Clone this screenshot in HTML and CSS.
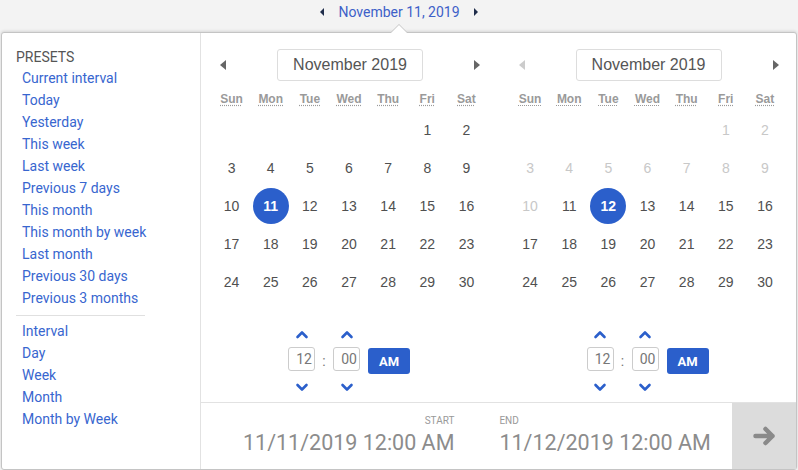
FILE: index.html
```html
<!DOCTYPE html>
<html lang="en">
<head>
  <meta charset="UTF-8">
  <meta name="viewport" content="width=device-width, initial-scale=1.0">
  <title>Date range picker</title>
  <link rel="stylesheet" href="styles.css">
</head>
<body>
  <div class="topbar">
    <span class="tri tri-left"></span>
    <span class="current">November 11, 2019</span>
    <span class="tri tri-right"></span>
  </div>

  <div class="popover">
    <aside class="presets">
      <div class="presets-title">PRESETS</div>
      <a class="preset">Current interval</a>
      <a class="preset">Today</a>
      <a class="preset">Yesterday</a>
      <a class="preset">This week</a>
      <a class="preset">Last week</a>
      <a class="preset">Previous 7 days</a>
      <a class="preset">This month</a>
      <a class="preset">This month by week</a>
      <a class="preset">Last month</a>
      <a class="preset">Previous 30 days</a>
      <a class="preset">Previous 3 months</a>
      <div class="sep"></div>
      <a class="preset">Interval</a>
      <a class="preset">Day</a>
      <a class="preset">Week</a>
      <a class="preset">Month</a>
      <a class="preset">Month by Week</a>
    </aside>

    <section class="range">
      <div class="calendars">
        <div class="cal">
          <div class="cal-nav">
            <span class="nav-btn"><span class="caret caret-left"></span></span>
            <div class="month-select">November 2019</div>
            <span class="nav-btn"><span class="caret caret-right"></span></span>
          </div>
          <div class="weekdays">
            <abbr>Sun</abbr><abbr>Mon</abbr><abbr>Tue</abbr><abbr>Wed</abbr><abbr>Thu</abbr><abbr>Fri</abbr><abbr>Sat</abbr>
          </div>
          <div class="days">
            <span></span><span></span><span></span><span></span><span></span><span>1</span><span>2</span>
            <span>3</span><span>4</span><span>5</span><span>6</span><span>7</span><span>8</span><span>9</span>
            <span>10</span><span class="selected">11</span><span>12</span><span>13</span><span>14</span><span>15</span><span>16</span>
            <span>17</span><span>18</span><span>19</span><span>20</span><span>21</span><span>22</span><span>23</span>
            <span>24</span><span>25</span><span>26</span><span>27</span><span>28</span><span>29</span><span>30</span>
          </div>
          <div class="time">
            <div class="spin">
              <svg class="chev chev-up" width="14" height="9" viewBox="0 0 14 9"><polyline points="2.5,7 7,2.5 11.5,7"/></svg>
              <div class="time-box">12</div>
              <svg class="chev chev-down" width="14" height="9" viewBox="0 0 14 9"><polyline points="2.5,2 7,6.5 11.5,2"/></svg>
            </div>
            <span class="colon">:</span>
            <div class="spin">
              <svg class="chev chev-up" width="14" height="9" viewBox="0 0 14 9"><polyline points="2.5,7 7,2.5 11.5,7"/></svg>
              <div class="time-box">00</div>
              <svg class="chev chev-down" width="14" height="9" viewBox="0 0 14 9"><polyline points="2.5,2 7,6.5 11.5,2"/></svg>
            </div>
            <button class="ampm">AM</button>
          </div>
        </div>

        <div class="cal">
          <div class="cal-nav">
            <span class="nav-btn"><span class="caret caret-left disabled"></span></span>
            <div class="month-select">November 2019</div>
            <span class="nav-btn"><span class="caret caret-right"></span></span>
          </div>
          <div class="weekdays">
            <abbr>Sun</abbr><abbr>Mon</abbr><abbr>Tue</abbr><abbr>Wed</abbr><abbr>Thu</abbr><abbr>Fri</abbr><abbr>Sat</abbr>
          </div>
          <div class="days">
            <span></span><span></span><span></span><span></span><span></span><span class="off">1</span><span class="off">2</span>
            <span class="off">3</span><span class="off">4</span><span class="off">5</span><span class="off">6</span><span class="off">7</span><span class="off">8</span><span class="off">9</span>
            <span class="off">10</span><span>11</span><span class="selected">12</span><span>13</span><span>14</span><span>15</span><span>16</span>
            <span>17</span><span>18</span><span>19</span><span>20</span><span>21</span><span>22</span><span>23</span>
            <span>24</span><span>25</span><span>26</span><span>27</span><span>28</span><span>29</span><span>30</span>
          </div>
          <div class="time">
            <div class="spin">
              <svg class="chev chev-up" width="14" height="9" viewBox="0 0 14 9"><polyline points="2.5,7 7,2.5 11.5,7"/></svg>
              <div class="time-box">12</div>
              <svg class="chev chev-down" width="14" height="9" viewBox="0 0 14 9"><polyline points="2.5,2 7,6.5 11.5,2"/></svg>
            </div>
            <span class="colon">:</span>
            <div class="spin">
              <svg class="chev chev-up" width="14" height="9" viewBox="0 0 14 9"><polyline points="2.5,7 7,2.5 11.5,7"/></svg>
              <div class="time-box">00</div>
              <svg class="chev chev-down" width="14" height="9" viewBox="0 0 14 9"><polyline points="2.5,2 7,6.5 11.5,2"/></svg>
            </div>
            <button class="ampm">AM</button>
          </div>
        </div>
      </div>

      <div class="summary">
        <div class="summary-dates">
          <div class="stamp stamp-start">
            <div class="stamp-label">START</div>
            <div class="stamp-value">11/11/2019 12:00 AM</div>
          </div>
          <div class="stamp">
            <div class="stamp-label">END</div>
            <div class="stamp-value">11/12/2019 12:00 AM</div>
          </div>
        </div>
        <button class="apply">
          <svg width="26" height="22" viewBox="0 0 26 22"><path d="M3.5 11 H20.5 M13.5 4 L20.5 11 L13.5 18"/></svg>
        </button>
      </div>
    </section>
  </div>
</body>
</html>
```

FILE: styles.css
```css
* {
  box-sizing: border-box;
}

body {
  margin: 0;
  width: 798px;
  height: 470px;
  overflow: hidden;
  background: #f3f3f3;
  font-family: Roboto, 'Liberation Sans', Arial, sans-serif;
  color: #555;
}

.topbar {
  height: 32px;
  display: flex;
  justify-content: center;
  align-items: center;
  gap: 11px;
  padding-bottom: 8px;
}

.current {
  color: #3d60c8;
  font-size: 14px;
  line-height: 18px;
  margin-left: 1px;
}

.tri {
  width: 0;
  height: 0;
  border-top: 4px solid transparent;
  border-bottom: 4px solid transparent;
}

.tri-left {
  border-right: 4px solid #1f2c4a;
  margin-right: 2px;
}

.tri-right {
  border-left: 4px solid #1f2c4a;
  margin-left: 3px;
}

.popover {
  position: relative;
  margin: 0 1px;
  width: 796px;
  height: 438px;
  background: #fff;
  border: 1px solid #c4c4c4;
  border-radius: 3px;
  box-shadow: 0 -1px 3px rgba(0, 0, 0, 0.12);
  display: flex;
}

/* little arrow pointing at the date label */
.popover::before,
.popover::after {
  content: "";
  position: absolute;
  left: 50%;
  width: 0;
  height: 0;
  border-left: 8px solid transparent;
  border-right: 8px solid transparent;
}

.popover::before {
  top: -9px;
  margin-left: -8px;
  border-bottom: 8px solid #c4c4c4;
}

.popover::after {
  top: -8px;
  margin-left: -8px;
  border-bottom: 8px solid #fff;
}

.presets {
  width: 199px;
  border-right: 1px solid #e2e2e2;
  padding: 14px 0 0 14px;
  display: flex;
  flex-direction: column;
  font-size: 14px;
  line-height: 22px;
}

.presets-title {
  color: #555;
  line-height: 20px;
}

.preset {
  color: #3866cf;
  padding-left: 6px;
  cursor: pointer;
}

.sep {
  width: 129px;
  height: 1px;
  background: #e0e0e0;
  margin: 6px 0 4px;
}

.range {
  flex: 1;
  display: flex;
  flex-direction: column;
}

.calendars {
  flex: 1;
  display: flex;
}

.cal {
  width: 50%;
  padding: 16px 0 0 11px;
  font-family: 'Liberation Sans', Arial, sans-serif;
}

.cal + .cal {
  padding-left: 12px;
}

.cal-nav {
  display: flex;
  align-items: center;
  height: 32px;
  width: 276px;
}

.nav-btn {
  width: 22px;
  height: 32px;
  display: flex;
  align-items: center;
  justify-content: center;
}

.month-select {
  width: 146px;
  height: 32px;
  margin: 0 auto;
  border: 1px solid #ddd;
  border-radius: 3px;
  font-size: 16px;
  line-height: 30px;
  text-align: center;
  color: #555;
}

.caret {
  width: 0;
  height: 0;
  border-top: 5px solid transparent;
  border-bottom: 5px solid transparent;
}

.caret-left {
  border-right: 6px solid #666;
}

.caret-right {
  border-left: 6px solid #666;
}

.caret-left.disabled {
  border-right-color: #ccc;
}

.weekdays,
.days {
  width: 274px;
  display: grid;
  grid-template-columns: repeat(7, 1fr);
}

.weekdays {
  margin-top: 7px;
  height: 21px;
  margin-bottom: 2px;
  align-items: center;
}

.weekdays abbr {
  justify-self: center;
  font-size: 12px;
  font-weight: bold;
  color: #9a9a9a;
  text-decoration: underline dotted;
  text-underline-offset: 2px;
}

.days {
  grid-auto-rows: 38px;
}

.days span {
  display: flex;
  align-items: center;
  justify-content: center;
  font-size: 14px;
  color: #505050;
}

.days .off {
  color: #c8c8c8;
}

.days .selected {
  justify-self: center;
  align-self: center;
  width: 36px;
  height: 36px;
  border-radius: 50%;
  background: #2b5fcb;
  color: #fff;
  font-weight: bold;
}

.time {
  margin-top: 29px;
  width: 274px;
  display: flex;
  justify-content: center;
  align-items: center;
}

.spin {
  display: flex;
  flex-direction: column;
  align-items: center;
}

.chev {
  display: block;
  fill: none;
  stroke: #2b5fcb;
  stroke-width: 2.6;
  stroke-linecap: round;
  stroke-linejoin: round;
}

.chev-up {
  margin-bottom: 8px;
}

.chev-down {
  margin-top: 12px;
}

.time-box {
  width: 27px;
  height: 24px;
  border: 1px solid #ccc;
  border-radius: 3px;
  font-family: Roboto, sans-serif;
  font-size: 14px;
  line-height: 22px;
  text-align: right;
  padding-right: 2px;
  color: #777;
}

.colon {
  width: 18px;
  text-align: center;
  font-size: 14px;
  color: #777;
  font-family: Roboto, sans-serif;
}

.ampm {
  margin-left: 8px;
  width: 42px;
  height: 26px;
  border: none;
  border-radius: 3px;
  background: #2b5fcb;
  color: #fff;
  font-family: Roboto, sans-serif;
  font-size: 13px;
  font-weight: bold;
  padding: 0;
}

.summary {
  height: 67px;
  border-top: 1px solid #e2e2e2;
  display: flex;
}

.summary-dates {
  flex: 1;
  display: flex;
  gap: 45px;
  padding: 11px 0 0 42px;
}

.stamp-start {
  text-align: right;
}

.stamp-label {
  font-size: 10px;
  line-height: 14px;
  color: #999;
}

.stamp-value {
  margin-top: 2px;
  font-size: 21.5px;
  line-height: 26px;
  color: #8c8c8c;
}

.apply {
  width: 64px;
  border: none;
  background: #dcdcdc;
  display: flex;
  align-items: center;
  justify-content: center;
  padding: 0 0 0 1px;
}

.apply svg {
  fill: none;
  stroke: #8a8a8a;
  stroke-width: 4.5;
  stroke-linecap: round;
  stroke-linejoin: round;
}
```
